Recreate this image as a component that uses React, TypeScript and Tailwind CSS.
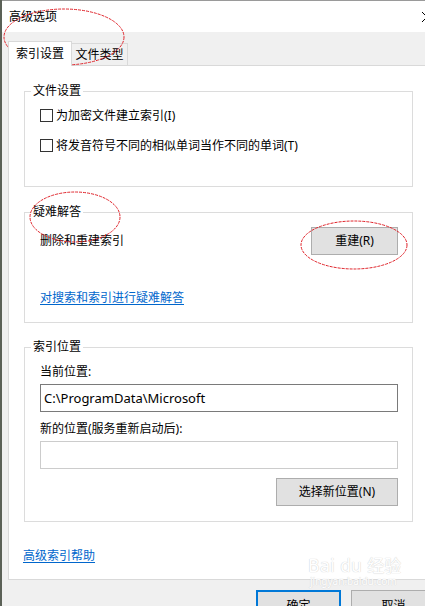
import React from 'react';

// Windows "高级选项" (indexing options) dialog, with the red annotation ellipses on top

const Checkbox = ({ label }: { label: string }) => (
  <div className="flex items-center h-[15px]">
    <span className="w-[13px] h-[13px] border border-[#333333] bg-white shrink-0" />
    <span className="ml-[3px]">{label}</span>
  </div>
);

const WinButton = ({ label, className = '' }: { label: string; className?: string }) => (
  <button className={`h-[28px] bg-[#e1e1e1] border border-[#adadad] flex items-center justify-center ${className}`}>
    {label}
  </button>
);

const Legend = ({ children }: { children: React.ReactNode }) => (
  <legend className="-ml-[9px] px-[2px] leading-[14px]">{children}</legend>
);

export default function App() {
  return (
    <div className="relative w-[425px] h-[606px] overflow-hidden flex bg-[#f0f0f0] text-[12px] leading-[16px] text-black font-['Noto_Sans','Noto_Sans_CJK_SC',sans-serif]">
      {/* dark window edge on the left */}
      <div className="w-[2px] shrink-0 bg-[#5b6157]" />

      <div className="flex-1 flex flex-col min-w-0">
        {/* title bar */}
        <div className="h-px shrink-0 bg-[#9a9a9a]" />
        <div className="h-[31px] shrink-0 bg-white flex items-center justify-between">
          <span className="pl-[7px]">高级选项</span>
          <svg className="w-[10px] h-[10px] -mr-[7px]" viewBox="0 0 10 10">
            <path d="M0 0L10 10M10 0L0 10" stroke="#000" strokeWidth="1" />
          </svg>
        </div>

        {/* tabs */}
        <div className="flex items-end shrink-0 pl-[6px] h-[33px]">
          <div className="w-[64px] h-[25px] bg-white border border-b-0 border-[#d9d9d9] flex items-center justify-center relative z-10 -mb-px">
            索引设置
          </div>
          <div className="w-[56px] h-[22px] border border-l-0 border-b-0 border-[#d9d9d9] flex items-center justify-center">
            文件类型
          </div>
        </div>

        {/* tab panel */}
        <div className="ml-[6px] -mr-[20px] h-[515px] shrink-0 bg-white border border-[#d9d9d9] pl-[15px] pt-[1px]">
          <fieldset className="w-[389px] h-[103px] mt-[17px] border border-[#dcdcdc] px-[15px]">
            <Legend>文件设置</Legend>
            <div className="mt-[10px] flex flex-col gap-[15px]">
              <Checkbox label="为加密文件建立索引(I)" />
              <Checkbox label="将发音符号不同的相似单词当作不同的单词(T)" />
            </div>
          </fieldset>

          <fieldset className="w-[389px] h-[118px] mt-[18px] border border-[#dcdcdc] pl-[15px] pr-[14px]">
            <Legend>疑难解答</Legend>
            <div className="mt-[8px] flex items-center justify-between">
              <span>删除和重建索引</span>
              <WinButton label="重建(R)" className="w-[87px]" />
            </div>
            <div className="mt-[35px]">
              <a className="text-[#0066cc] underline underline-offset-2">对搜索和索引进行疑难解答</a>
            </div>
          </fieldset>

          <fieldset className="w-[389px] h-[182px] mt-[17px] border border-[#dcdcdc] pl-[15px] pr-[14px]">
            <Legend>索引位置</Legend>
            <div className="mt-[10px]">当前位置:</div>
            <div className="mt-[4px] h-[28px] border border-[#7a7a7a] flex items-center px-[3px] text-[13px]">
              C:\ProgramData\Microsoft
            </div>
            <div className="mt-[9px]">新的位置(服务重新启动后):</div>
            <div className="mt-[4px] h-[28px] border border-[#cccccc]" />
            <div className="mt-[9px] flex justify-end">
              <WinButton label="选择新位置(N)" className="w-[122px]" />
            </div>
          </fieldset>

          <div className="mt-[26px] -ml-[16px] pl-[15px]">
            <a className="text-[#0066cc] underline underline-offset-2">高级索引帮助</a>
          </div>
        </div>

        {/* dialog buttons */}
        <div className="flex shrink-0 pl-[254px] pt-[10px] gap-[10px]">
          <button className="w-[85px] h-[30px] shrink-0 bg-[#e1e1e1] border-2 border-[#0078d7] flex justify-center pt-[6px]">
            确定
          </button>
          <button className="w-[85px] h-[30px] shrink-0 bg-[#e1e1e1] border border-[#adadad] flex justify-center pt-[7px]">
            取消
          </button>
        </div>
      </div>

      {/* Baidu watermark */}
      <div className="absolute left-[308px] top-[556px] pointer-events-none select-none whitespace-nowrap text-white [text-shadow:0_0_1px_#d4d4d4,0_0_1px_#d4d4d4]">
        <div className="text-[17px] leading-[20px] font-['DejaVu_Sans','Noto_Sans_CJK_SC',sans-serif]">Bai du 经验</div>
        <div className="text-[10px] leading-[11px] ml-[2px]">jingyan.baidu.com</div>
      </div>

      {/* red annotation ellipses */}
      <svg className="absolute inset-0 pointer-events-none" width="425" height="606" viewBox="0 0 425 606">
        <ellipse cx="64" cy="37" rx="60" ry="28" fill="none" stroke="#e0242b" strokeWidth="1" strokeDasharray="3 1" />
        <ellipse cx="75" cy="217" rx="45" ry="25" fill="none" stroke="#e0242b" strokeWidth="1" strokeDasharray="3 1" />
        <ellipse cx="354" cy="245" rx="53" ry="24" fill="none" stroke="#e0242b" strokeWidth="1" strokeDasharray="3 1" />
      </svg>
    </div>
  );
}
